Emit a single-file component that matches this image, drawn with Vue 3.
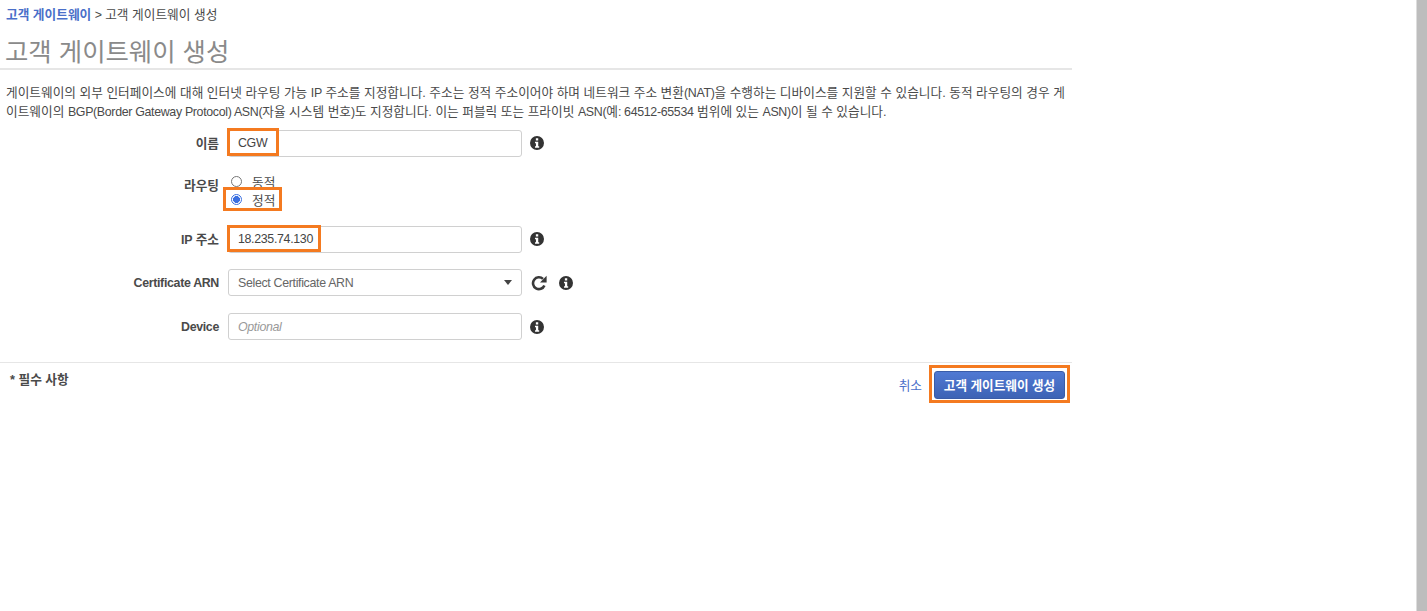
<script setup>
const info = "M8 0a8 8 0 1 0 0 16A8 8 0 0 0 8 0zM6.7 2.6h2.7v2.6H6.7zM5.7 6.5h3.7v5.2h1.1v1.7H5.7v-1.7h1.1V8.2H5.7z";
</script>

<template>
  <div class="page">
    <main class="content">
      <nav class="crumbs"><a class="link strong">고객 게이트웨이</a> <span class="lat">&gt;</span> 고객 게이트웨이 생성</nav>
      <h1 class="title">고객 게이트웨이 생성</h1>
      <p class="desc">게이트웨이의 외부 인터페이스에 대해 인터넷 라우팅 가능 <span class="lat">IP</span> 주소를 지정합니다. 주소는 정적 주소이어야 하며 네트워크 주소 변환<span class="lat">(NAT)</span>을 수행하는 디바이스를 지원할 수 있습니다. 동적 라우팅의 경우 게이트웨이의 <span class="lat">BGP(Border Gateway Protocol) ASN(</span>자율 시스템 번호<span class="lat">)</span>도 지정합니다. 이는 퍼블릭 또는 프라이빗 <span class="lat">ASN(</span>예<span class="lat">: 64512-65534</span> 범위에 있는 <span class="lat">ASN)</span>이 될 수 있습니다.</p>

      <form class="form">
        <div class="row row-name">
          <label class="label">이름</label>
          <div class="field">
            <span class="control"><span class="val lat">CGW</span></span>
            <span class="mark mark-name"></span>
          </div>
          <svg class="info" viewBox="0 0 16 16"><path fill-rule="evenodd" :d="info" /></svg>
        </div>

        <div class="row row-routing">
          <label class="label">라우팅</label>
          <div class="radios">
            <div class="radio"><span class="dot"></span><span class="rtext">동적</span></div>
            <div class="radio"><span class="dot on"></span><span class="rtext">정적</span></div>
            <span class="mark mark-radio"></span>
          </div>
        </div>

        <div class="row row-ip">
          <label class="label"><span class="lat">IP</span> 주소</label>
          <div class="field">
            <span class="control"><span class="val lat">18.235.74.130</span></span>
            <span class="mark mark-ip"></span>
          </div>
          <svg class="info" viewBox="0 0 16 16"><path fill-rule="evenodd" :d="info" /></svg>
        </div>

        <div class="row row-cert">
          <label class="label"><span class="lat">Certificate ARN</span></label>
          <div class="field">
            <span class="control select"><span class="ph lat">Select Certificate ARN</span><span class="caret"></span></span>
          </div>
          <svg class="refresh" viewBox="0 0 16 16"><path fill="none" stroke="#3a3a3a" stroke-width="2.6" d="M13.4 10.4A5.9 5.9 0 1 1 12 3.9" /><path fill="#3a3a3a" d="M15.6 .8v6.6H9z" /></svg>
          <svg class="info info-cert" viewBox="0 0 16 16"><path fill-rule="evenodd" :d="info" /></svg>
        </div>

        <div class="row row-device">
          <label class="label"><span class="lat">Device</span></label>
          <div class="field">
            <span class="control"><span class="optional lat">Optional</span></span>
          </div>
          <svg class="info" viewBox="0 0 16 16"><path fill-rule="evenodd" :d="info" /></svg>
        </div>
      </form>

      <footer class="foot">
        <span class="req">* 필수 사항</span>
        <div class="actions">
          <a class="link cancel">취소</a>
          <span class="btn-wrap"><button type="button" class="btn">고객 게이트웨이 생성</button><span class="mark mark-btn"></span></span>
        </div>
      </footer>
    </main>
    <div class="scrollbar"></div>
  </div>
</template>

<style>
html, body { margin: 0; background: #fff; overflow: hidden; }
</style>

<style scoped>
.page {
  width: 1427px;
  height: 611px;
  display: flex;
  justify-content: space-between;
  font-family: "Liberation Sans", "Noto Sans CJK KR", sans-serif;
  font-size: 12.7px;
  color: #4a4a4a;
  background: #fff;
  overflow: hidden;
}
.lat { font-size: 12.4px; letter-spacing: -0.33px; line-height: 0; }
.content { width: 1072px; padding-top: 8px; box-sizing: border-box; }
.crumbs { margin-left: 6px; height: 15px; line-height: 15px; }
.link { color: #4a6fc9; }
.strong { font-weight: 700; }
.title {
  margin: 14px 0 0 5px;
  font-size: 25.4px;
  line-height: 30px;
  font-weight: 400;
  color: #8a8a8a;
}
.desc {
  margin: 1px 0 0;
  border-top: 2px solid #e6e6e6;
  padding: 14px 4px 0 6px;
  line-height: 19px;
}
.form { margin-top: 8px; }
.row { display: flex; align-items: center; }
.label {
  width: 219px;
  text-align: right;
  font-weight: 700;
  flex: none;
}
.field { position: relative; margin-left: 9px; }
.control {
  display: flex;
  align-items: center;
  box-sizing: border-box;
  width: 294px;
  height: 27px;
  padding: 0 9px;
  border: 1px solid #d0d0d0;
  border-radius: 3px;
  background: #fff;
}
.row-name .control, .row-ip .control { padding-bottom: 2px; }
.row-name .label, .row-ip .label, .row-name .info, .row-ip .info { margin-bottom: 2px; }
.val { color: #444; }
.select { justify-content: space-between; }
.ph { color: #666; }
.optional { color: #999; font-style: italic; }
.caret { width: 0; height: 0; border: 4.5px solid transparent; border-top: 5px solid #444; border-bottom: 0; }
.info { width: 14px; height: 14px; margin-left: 8px; fill: #333; flex: none; }
.refresh { width: 16px; height: 16px; margin-left: 9px; flex: none; }
.info-cert { margin-left: 12px; }
.mark { position: absolute; box-sizing: border-box; border: 3px solid #f47a20; pointer-events: none; }
.mark-name { left: -1px; top: -2px; width: 52px; height: 28px; }
.mark-ip { left: -1px; top: -1px; width: 94px; height: 27px; }
.mark-radio { left: -8px; top: 15px; width: 59px; height: 24px; }
.row-name { height: 27px; }
.row-routing { margin-top: 15px; align-items: flex-start; height: 40px; }
.row-routing .label { margin-top: 3px; }
.radios { position: relative; margin-left: 12px; }
.radio { display: flex; align-items: center; height: 18px; }
.dot {
  box-sizing: border-box;
  width: 11px;
  height: 11px;
  border: 1px solid #767676;
  border-radius: 50%;
  background: #fff;
}
.dot.on { border: 1px solid #3b6fe0; background: radial-gradient(circle, #3b6fe0 0 3.2px, #fff 3.7px); }
.rtext { margin-left: 10px; }
.row-ip { margin-top: 14px; }
.row-cert { margin-top: 16px; }
.row-device { margin-top: 17px; }
.foot {
  position: relative;
  margin-top: 22px;
  border-top: 1px solid #e6e6e6;
  display: flex;
  justify-content: space-between;
  align-items: flex-start;
}
.req { margin: 6px 0 0 10px; font-weight: 700; }
.actions { display: flex; align-items: center; margin: 8px 7px 0 0; }
.cancel { margin-right: 12px; }
.btn-wrap { position: relative; display: block; height: 27px; }
.btn {
  display: block;
  width: 131px;
  height: 28px;
  padding: 0 0 2px;
  border: 1px solid #3a5ca8;
  border-radius: 3px;
  background: linear-gradient(#5079d3, #3d63b5);
  color: #fff;
  font: 700 12.6px "Liberation Sans", "Noto Sans CJK KR", sans-serif;
}
.mark-btn { left: -5px; top: -6px; width: 141px; height: 38px; }
.scrollbar { width: 10px; height: 611px; background: #bdbdbd; border-left: 1px solid #ddd; }
</style>
